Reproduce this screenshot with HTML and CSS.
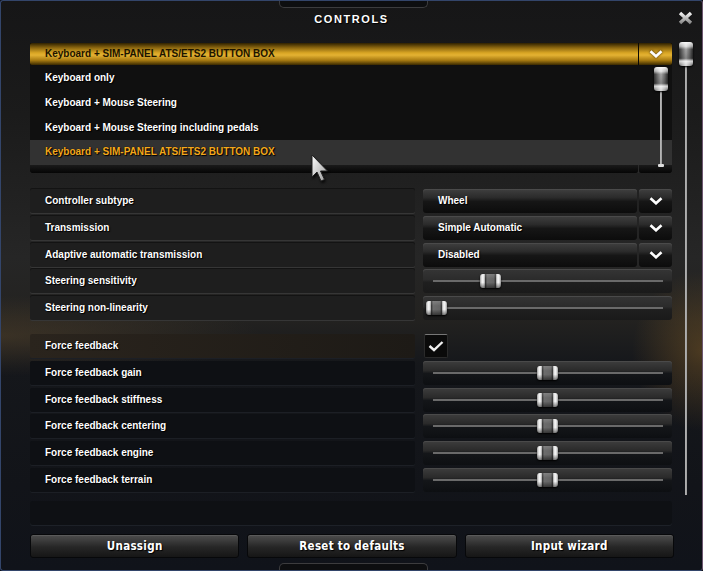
FILE: index.html
```
<html><head>
    <title>Controls</title>
    <meta name="viewport" content="width=device-width, initial-scale=1">
    <link rel="stylesheet" href="styles.css">
    </head>
    <body>
    <div class="window">
        <div class="header">
            <h1 class="title">CONTROLS</h1>
            <div class="close">
                <svg width="15" height="14" viewBox="0 0 15 14">
                    <defs><linearGradient id="xg" x1="0" y1="0" x2="0" y2="1"><stop offset="0" stop-color="#f2f2f2"/><stop offset="1" stop-color="#8a8a8a"/></linearGradient></defs>
                    <path d="M2 2 L13 12 M13 2 L2 12" stroke="url(#xg)" stroke-width="3.4" fill="none"/>
                </svg>
            </div>
        </div>
        <div class="main">
            <div class="content">
                <div class="combo">
                    <div class="combo-head">
                        <div class="combo-value">Keyboard + SIM-PANEL ATS/ETS2 BUTTON BOX</div>
                        <div class="combo-arrow"><svg class="chev" width="14" height="8" viewBox="0 0 14 8"><path d="M1.5 1.2 L7 6.3 L12.5 1.2" fill="none" stroke="#fff" stroke-width="2.6"/></svg></div>
                    </div>
                    <ul class="combo-list">
                        <li>Keyboard only</li>
                        <li>Keyboard + Mouse Steering</li>
                        <li>Keyboard + Mouse Steering including pedals</li>
                        <li class="active">Keyboard + SIM-PANEL ATS/ETS2 BUTTON BOX</li>
                    </ul>
                    <div class="combo-foot"><span></span><span></span></div>
                    <div class="list-scroll"><div class="vthumb"></div><div class="knob"></div></div>
                    <svg class="cursor" width="18" height="29" viewBox="0 0 18 29">
                        <defs><linearGradient id="cg" x1="0" y1="0" x2="1" y2="1"><stop offset="0" stop-color="#ffffff"/><stop offset="1" stop-color="#9a9a9a"/></linearGradient></defs>
                        <path d="M1 1 L1 23 L6 18 L10 27 L13.5 25.5 L9.5 17 L16.5 17 Z" fill="url(#cg)" stroke="#222" stroke-width="1"/>
                    </svg>
                </div>

                <div class="group group-basic">
                    <div class="row">
                        <div class="label">Controller subtype</div>
                        <div class="select"><div class="select-value">Wheel</div><div class="select-arrow"><svg class="chev" width="14" height="8" viewBox="0 0 14 8"><path d="M1.5 1.2 L7 6.3 L12.5 1.2" fill="none" stroke="#fff" stroke-width="2.6"/></svg></div></div>
                    </div>
                    <div class="row">
                        <div class="label">Transmission</div>
                        <div class="select"><div class="select-value">Simple Automatic</div><div class="select-arrow"><svg class="chev" width="14" height="8" viewBox="0 0 14 8"><path d="M1.5 1.2 L7 6.3 L12.5 1.2" fill="none" stroke="#fff" stroke-width="2.6"/></svg></div></div>
                    </div>
                    <div class="row">
                        <div class="label">Adaptive automatic transmission</div>
                        <div class="select"><div class="select-value">Disabled</div><div class="select-arrow"><svg class="chev" width="14" height="8" viewBox="0 0 14 8"><path d="M1.5 1.2 L7 6.3 L12.5 1.2" fill="none" stroke="#fff" stroke-width="2.6"/></svg></div></div>
                    </div>
                    <div class="row">
                        <div class="label">Steering sensitivity</div>
                        <div class="slider"><div class="track"><div class="thumb" style="left: 47px;"></div></div></div>
                    </div>
                    <div class="row">
                        <div class="label">Steering non-linearity</div>
                        <div class="slider"><div class="track"><div class="thumb" style="left: -7px;"></div></div></div>
                    </div>
                </div>

                <div class="group group-ffb">
                    <div class="row row-on">
                        <div class="label">Force feedback</div>
                        <div class="check-cell"><div class="checkbox"><svg width="16" height="12" viewBox="0 0 16 12"><path d="M1.5 6 L6 10 L14.5 2" fill="none" stroke="#eee" stroke-width="2.4"/></svg></div></div>
                    </div>
                    <div class="row">
                        <div class="label">Force feedback gain</div>
                        <div class="slider"><div class="track"><div class="thumb" style="left: 104px;"></div></div></div>
                    </div>
                    <div class="row">
                        <div class="label">Force feedback stiffness</div>
                        <div class="slider"><div class="track"><div class="thumb" style="left: 104px;"></div></div></div>
                    </div>
                    <div class="row">
                        <div class="label">Force feedback centering</div>
                        <div class="slider"><div class="track"><div class="thumb" style="left: 104px;"></div></div></div>
                    </div>
                    <div class="row">
                        <div class="label">Force feedback engine</div>
                        <div class="slider"><div class="track"><div class="thumb" style="left: 104px;"></div></div></div>
                    </div>
                    <div class="row">
                        <div class="label">Force feedback terrain</div>
                        <div class="slider"><div class="track"><div class="thumb" style="left: 104px;"></div></div></div>
                    </div>
                </div>

                <div class="info-bar"></div>

                <div class="actions">
                    <button class="button">Unassign</button>
                    <button class="button">Reset to defaults</button>
                    <button class="button">Input wizard</button>
                </div>
            </div>
            <div class="scrollbar"><div class="vthumb"></div></div>
        </div>
    </div>
    </body>
    </html>
```

FILE: styles.css
```
html, body {
    margin: 0;
    background: #0c0d10;
}
body {
    font-family: "Liberation Sans", Arial, sans-serif;
    font-size: 10px;
    font-weight: bold;
    color: #fff;
}
.window {
    position: relative;
    width: 703px;
    height: 571px;
    box-sizing: border-box;
    border: 1px solid #33456a;
    border-right-color: #6c5670;
    border-radius: 3px;
    overflow: hidden;
    background:
        radial-gradient(ellipse 70px 80px at 100% 350px, rgba(150, 105, 40, 0.4), transparent),
        radial-gradient(ellipse 260px 40px at 0 335px, rgba(110, 85, 50, 0.35), transparent),
        linear-gradient(to bottom, #161617 0%, #1b1b1b 20%, #262626 45%, #232220 56%, #15171b 64%, #121419 85%, #10131a 100%);
}
.window::before,
.window::after {
    content: "";
    position: absolute;
    left: 278px;
    width: 147px;
    height: 7px;
    background: #0d0e10;
    border: 1px solid #3c3c3e;
}
.window::before {
    top: -1px;
    border-top: none;
    border-radius: 0 0 5px 5px;
}
.window::after {
    bottom: -1px;
    border-bottom: none;
    border-radius: 5px 5px 0 0;
}
.header {
    height: 42px;
    display: grid;
    grid-template-columns: 1fr auto 1fr;
}
.title {
    grid-column: 2;
    margin: 11px 0 0;
    font-size: 11px;
    line-height: 14px;
    letter-spacing: 1.6px;
    text-shadow: 1px 1px 1px #000;
}
.close {
    grid-column: 3;
    justify-self: end;
    margin: 10px 9px 0 0;
}
.main {
    display: flex;
    padding-left: 29px;
}
.content {
    width: 642px;
    display: flex;
    flex-direction: column;
}

/* dropdown */
.combo {
    position: relative;
}
.combo-head {
    height: 22px;
    display: grid;
    grid-template-columns: 608px 33px;
    column-gap: 1px;
    background: #0c0a05;
}
.combo-value,
.combo-arrow {
    background: linear-gradient(to bottom, #2e2100 0%, #8c6710 22%, #d9a624 45%, #e4b233 55%, #a97c12 78%, #3a2900 100%);
}
.combo-value {
    color: #1c1400;
    padding-left: 15px;
    line-height: 22px;
    border-radius: 2px 0 0 2px;
}
.combo-arrow {
    display: flex;
    align-items: center;
    justify-content: center;
    border-radius: 0 2px 2px 0;
}
.combo-arrow .chev {
    filter: drop-shadow(0 0 1px #3a2600);
}
.combo-list {
    list-style: none;
    margin: 0;
    padding: 0;
    background: #101010;
}
.combo-list li {
    height: 25px;
    line-height: 25px;
    padding-left: 15px;
    text-shadow: 1px 1px 1px #000, 0 0 1px #000;
}
.combo-list li.active {
    background: #323232;
    color: #f3a81c;
    line-height: 24px;
}
.combo-foot {
    height: 8px;
    display: grid;
    grid-template-columns: 608px 33px;
    column-gap: 1px;
    background: #2a2a2a;
}
.combo-foot span {
    background: linear-gradient(to bottom, #1a1a1a, #050505);
    border-radius: 0 0 2px 2px;
}
.list-scroll {
    position: absolute;
    left: 624px;
    top: 24px;
    width: 14px;
    height: 100px;
    display: flex;
    flex-direction: column;
    align-items: center;
    background: linear-gradient(to right, transparent 6px, #9a9a9a 6px, #d0d0d0 7px, #777 8px, transparent 8px);
}
.knob {
    margin-top: auto;
    width: 6px;
    height: 3px;
    background: #ddd;
    border-radius: 1px;
}
.vthumb {
    width: 14px;
    height: 24px;
    border-radius: 3px;
    background:
        linear-gradient(to bottom, rgba(255,255,255,0.9) 0, rgba(255,255,255,0.5) 18%, rgba(0,0,0,0.2) 30%, rgba(0,0,0,0.35) 68%, rgba(255,255,255,0.75) 80%, rgba(255,255,255,0.2) 100%),
        linear-gradient(to right, #3e3e3e 0, #a8a8a8 35%, #cfcfcf 50%, #8a8a8a 75%, #333 100%);
    box-shadow: 0 1px 2px #000;
}
.cursor {
    position: absolute;
    left: 281px;
    top: 111px;
    filter: drop-shadow(1px 2px 1px rgba(0,0,0,0.7));
}

/* settings rows */
.group {
    display: flex;
    flex-direction: column;
    gap: 2.75px;
}
.group-basic {
    margin-top: 16px;
}
.group-ffb {
    margin-top: 14px;
}
.row {
    height: 24px;
    display: grid;
    grid-template-columns: 385px 249px;
    column-gap: 8px;
}
.label {
    padding-left: 15px;
    line-height: 24px;
    text-shadow: 1px 1px 1px #000, 0 0 1px #000;
    border-radius: 2px;
}
.group-basic .label {
    background: #1e1e1e;
    box-shadow: 0 -1px 0 #131313, 0 1px 0 #363636;
}
.group-ffb .label {
    background: #0e1014;
    box-shadow: 0 1px 0 #1c1f25;
}
.group-ffb .row-on .label {
    background: linear-gradient(to right, #2a241d, #1d1a16);
}
.select {
    display: grid;
    grid-template-columns: 214px 33px;
    column-gap: 2px;
}
.select-value,
.select-arrow,
.slider {
    border-radius: 3px;
    background: linear-gradient(to bottom, #3f3f3f 0%, #2b2b2b 35%, #161616 52%, #0c0c0c 100%);
    box-shadow: inset 0 1px 0 #4a4a4a;
}
.select-value {
    padding-left: 15px;
    line-height: 24px;
    text-shadow: 1px 1px 1px #000;
}
.select-arrow {
    display: flex;
    align-items: center;
    justify-content: center;
}
.slider {
    padding: 0 9px 0 10px;
    display: flex;
    align-items: center;
    background: linear-gradient(to bottom, #3d3d3d 0%, #2a2a2a 40%, #141619 52%, #0d0f12 100%);
}
.group-basic .slider {
    background: linear-gradient(to bottom, #353535 0%, #2b2b2b 45%, #1f1f1f 55%, #1a1a1a 100%);
}
.track {
    position: relative;
    flex: 1;
    height: 2px;
    background: #6a6a6a;
}
.thumb {
    position: absolute;
    top: -6px;
    width: 21px;
    height: 14px;
    border-radius: 3px;
    background:
        linear-gradient(to bottom, rgba(255,255,255,0.15) 0, transparent 35%, transparent 60%, rgba(0,0,0,0.5) 100%),
        linear-gradient(to right, #9a9a9a 0, #f6f6f6 10%, #e0e0e0 20%, #3a3a3a 26%, #6c6c6c 34%, #646464 66%, #3a3a3a 74%, #e0e0e0 80%, #f6f6f6 90%, #9a9a9a 100%);
    box-shadow: 0 1px 2px #000;
}
.check-cell {
    display: flex;
}
.checkbox {
    width: 24px;
    height: 24px;
    margin-left: 1px;
    box-sizing: border-box;
    border-radius: 2px;
    background: #0a0a0a;
    border: 1px solid #2a2a2a;
    border-top-color: #777;
    display: flex;
    align-items: center;
    justify-content: center;
}

/* bottom */
.info-bar {
    margin-top: 9px;
    height: 24px;
    border-radius: 3px;
    background: #0e1014;
    box-shadow: 0 1px 0 #1d2128;
}
.actions {
    margin-top: 9px;
    margin-right: -2px;
    display: grid;
    grid-template-columns: repeat(3, 1fr);
    column-gap: 8px;
}
.button {
    height: 24px;
    border: 1px solid #07080a;
    border-radius: 3px;
    color: #fff;
    font-family: "DejaVu Sans Condensed", "Liberation Sans Narrow", sans-serif;
    font-weight: bold;
    font-size: 11.5px;
    letter-spacing: 0.3px;
    text-shadow: 1px 1px 1px #000;
    background: linear-gradient(to bottom, #4c4c4c 0%, #3c3c3c 25%, #262626 55%, #161616 100%);
    box-shadow: inset 0 1px 0 #5a5a5a;
    padding: 0;
}

/* outer scrollbar */
.scrollbar {
    flex: 1;
    padding-left: 7px;
    margin-top: -1px;
    height: 453px;
    background: linear-gradient(to right, transparent 13px, #8c8c8c 13px, #cfcfcf 14px, #777 15px, transparent 15px);
}
```
